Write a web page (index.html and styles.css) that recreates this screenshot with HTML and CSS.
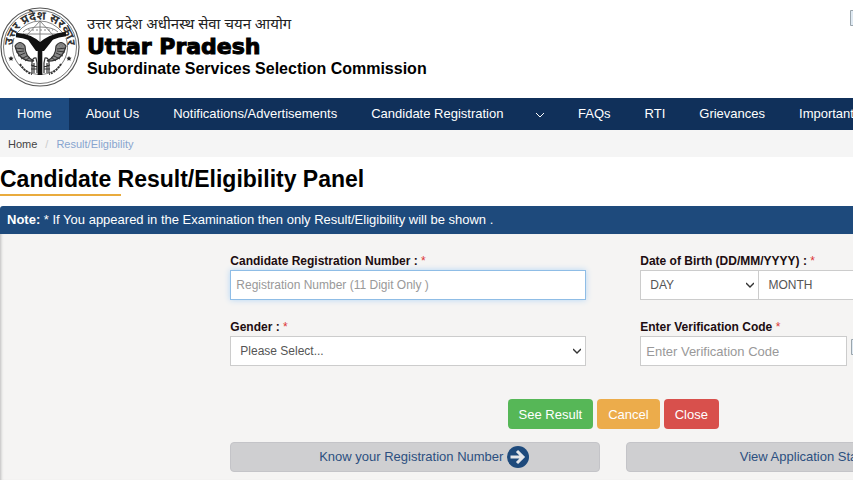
FILE: index.html
```
<!DOCTYPE html>
<html lang="en">

<head>
    <title>Candidate Result/Eligibility Panel</title>
    <meta charset="utf-8">
    <meta name="viewport" content="width=device-width, initial-scale=1">
    <link rel="stylesheet" href="styles.css">
</head>

<body>

    <header class="header">
        <svg class="emblem" viewBox="0 0 80 80" role="img" aria-label="Government of Uttar Pradesh">
            <defs>
                <path id="arc" d="M14 49A27.500 27.500 0 1 1 66 49" />
            </defs>
            <g fill="none" stroke="#555">
                <circle cx="40" cy="40" r="39" stroke-width="1.200" />
                <circle cx="40" cy="40" r="36.500" stroke-width=".8" />
                <path d="M14 31A27.500 27.500 0 1 0 66 31" stroke-width=".8" />
                <path d="M17 26Q27 14 40 14T63 26" stroke-width=".7" />
            </g>
            <text class="emblem-text"><textPath href="#arc" startOffset="50%" text-anchor="middle">उत्तर प्रदेश सरकार</textPath></text>
            <!-- bow and arrow -->
            <g fill="none" stroke="#777" stroke-width=".9">
                <path d="M23 25Q27 20 40 20T58 25M23 27H58M40 14V35M40 14L27 28M40 14L53 28" />
                <path d="M28 23h25" stroke-dasharray="2 2" />
            </g>
            <!-- rivers -->
            <path d="M16 28Q31 29 40 38Q50 29 66 27M40 36V68" fill="none" stroke="#111" stroke-width="4.600" />
            <path d="M26 30l14 6 15-6-11 14h-8z" fill="#111" />
            <!-- fish -->
            <g id="fish" fill="none" stroke="#333">
                <path d="M15 39q5-7 10 0q0 11 9 15q-15 1-19-15z" fill="#888" stroke-width="1.200" />
                <path d="M15 41l9 1M16 45l8-1M18 49l7-3M21 52l6-3M25 54l5-4" stroke-width="1" />
                <circle cx="20" cy="39" r="1" fill="#fff" stroke-width=".6" />
                <path d="M32 66V55q1-5 4-4l1 5v10M34 56v10M31 58l6 2M31 62h6" stroke-width="1.200" />
                <path d="M20 57q5 8 12 10" stroke-width="2" stroke-dasharray="2 1" />
            </g>
            <use href="#fish" transform="matrix(-1 0 0 1 81 0)" />
            <g fill="#222">
                <path d="M11 49l.8 1.600 1.800.2-1.300 1.200.3 1.800-1.600-.9-1.600.9.3-1.800-1.300-1.200 1.800-.2z" />
                <path d="M69 49l.8 1.600 1.800.2-1.300 1.200.3 1.800-1.600-.9-1.600.9.3-1.800-1.300-1.200 1.800-.2z" />
            </g>
        </svg>
        <div class="brand">
            <div class="brand-hindi" lang="hi">उत्तर प्रदेश अधीनस्थ सेवा चयन आयोग</div>
            <div class="brand-state">Uttar Pradesh</div>
            <div class="brand-name">Subordinate Services Selection Commission</div>
        </div>
        <svg class="missing header-missing" viewBox="0 0 16 16" aria-hidden="true">
            <path d="M.5.5h10l5 5v10H.5z" fill="#dfe9f2" stroke="#9aa5ad" />
            <path d="M3 3h7v3h3v7H3z" fill="#c3d9f5" />
            <path d="M3 13l4-5 6 5z" fill="#5aa454" />
        </svg>
    </header>

    <nav class="nav">
        <a class="active" href="#">Home</a>
        <a href="#">About Us</a>
        <a href="#">Notifications/Advertisements</a>
        <a href="#">Candidate Registration
            <svg viewBox="0 0 8 6" aria-hidden="true"><path d="M0 1l4 4 4-4" /></svg>
        </a>
        <a href="#">FAQs</a>
        <a href="#">RTI</a>
        <a href="#">Grievances</a>
        <a href="#">Important</a>
    </nav>

    <div class="breadcrumb">
        <a href="#">Home</a>
        <span class="slash">/</span>
        <span class="current">Result/Eligibility</span>
    </div>

    <h1 class="title">Candidate Result/Eligibility Panel</h1>

    <p class="note"><strong>Note:</strong> * If You appeared in the Examination then only Result/Eligibility will be shown .</p>

    <main class="panel">
        <form class="form">
            <div class="fields">
                <div class="field">
                    <label for="regno">Candidate Registration Number : <span class="req">*</span></label>
                    <input class="control focused" id="regno" type="text" placeholder="Registration Number (11 Digit Only )">
                </div>
                <div class="field">
                    <label for="day">Date of Birth (DD/MM/YYYY) : <span class="req">*</span></label>
                    <div class="dob">
                        <select class="control" id="day"><option>DAY</option></select>
                        <select class="control" aria-label="Month"><option>MONTH</option></select>
                        <select class="control" aria-label="Year"><option>YEAR</option></select>
                    </div>
                </div>
                <div class="field">
                    <label for="gender">Gender : <span class="req">*</span></label>
                    <select class="control" id="gender"><option>Please Select...</option></select>
                </div>
                <div class="field">
                    <label for="code">Enter Verification Code <span class="req">*</span></label>
                    <div class="captcha">
                        <input class="control" id="code" type="text" placeholder="Enter Verification Code">
                        <svg class="missing" viewBox="0 0 16 16" aria-hidden="true">
                            <path d="M.5.5h10l5 5v10H.5z" fill="#dfe9f2" stroke="#9aa5ad" />
                            <path d="M3 3h7v3h3v7H3z" fill="#c3d9f5" />
                            <path d="M3 13l4-5 6 5z" fill="#5aa454" />
                        </svg>
                    </div>
                </div>
            </div>

            <div class="actions">
                <button class="btn green" type="button">See Result</button>
                <button class="btn orange" type="button">Cancel</button>
                <button class="btn red" type="button">Close</button>
            </div>

            <div class="links">
                <a class="link" href="#">Know your Registration Number
                    <svg viewBox="0 0 22 22" aria-hidden="true">
                        <circle cx="11" cy="11" r="11" />
                        <path d="M3.500 11H16M10 5l6 6-6 6" />
                    </svg>
                </a>
                <a class="link" href="#">View Application Status
                    <svg viewBox="0 0 22 22" aria-hidden="true">
                        <circle cx="11" cy="11" r="11" />
                        <path d="M3.500 11H16M10 5l6 6-6 6" />
                    </svg>
                </a>
            </div>
        </form>
    </main>

</body>

</html>
```
FILE: styles.css
```
* {
    box-sizing: border-box;
}
html {
    height: 100%;
}
body {
    margin: 0;
    min-height: 100%;
    display: flex;
    flex-direction: column;
    overflow: hidden;
    background: #fff;
    color: #000;
    font-family: "Liberation Sans", Arial, sans-serif;
    font-size: 13px;
    line-height: 20px;
}
a {
    color: inherit;
    text-decoration: none;
}

/* header */
.header {
    display: flex;
    align-items: flex-start;
    gap: 7px;
    padding: 7px 0 11px;
}
.emblem {
    width: 80px;
    height: 80px;
    flex: none;
}
.emblem-text {
    font: bold 12px "Noto Sans", "Noto Sans Devanagari", sans-serif;
    fill: #333;
}
.brand {
    padding-top: 5px;
    white-space: nowrap;
}
.brand-hindi {
    font: 15px/22px "Noto Sans", "Noto Sans Devanagari", sans-serif;
    color: #222;
}
.brand-state {
    font: 900 22px/25px "Arial Black", "DejaVu Sans", sans-serif;
    -webkit-text-stroke: 1px #000;
}
.brand-name {
    font-size: 16px;
    font-weight: bold;
}
.missing {
    width: 16px;
    height: 16px;
    flex: none;
}
.header-missing {
    margin: 3px -13px 0 auto;
}

/* navigation */
.nav {
    display: flex;
    background: #10305a;
    color: #fff;
    white-space: nowrap;
}
.nav a {
    flex: none;
    padding: 6px 17px;
}
.nav .active {
    background: #1e4b80;
}
.nav svg {
    width: 8px;
    height: 6px;
    margin-left: 29px;
    fill: none;
    stroke: #fff;
    vertical-align: middle;
}

.breadcrumb {
    display: flex;
    gap: 8px;
    padding: 4px 8px 3px;
    background: #f5f5f5;
    color: #444;
    font-size: 11px;
}
.slash {
    color: #ccc;
}
.current {
    color: #88a5cf;
}

.title {
    margin: 0 0 10px;
    padding-top: 7px;
    font-size: 23px;
    line-height: 30px;
}
.title::after {
    content: "";
    display: block;
    width: 121px;
    height: 2px;
    background: #e9ab3d;
}
.note {
    margin: 0;
    padding: 4px 7px;
    border-radius: 3px 0 0 0;
    background: #1e4a7c;
    color: #fff;
    white-space: nowrap;
}

/* form */
.panel {
    flex: 1;
    padding: 18px 0 8px 27%;
    background: #f5f4f3;
    box-shadow: inset 3px 0 3px -2px #bbb;
}
/* runs past the right edge of the window */
.form {
    width: 123%;
}
.fields {
    display: grid;
    grid-template-columns: 1fr 1fr;
    gap: 18px 54px;
}
.field {
    min-width: 0;
}
.field label {
    display: block;
    color: #200c10;
    font-size: 12px;
    font-weight: bold;
    line-height: 18px;
}
.req {
    color: #dc3535;
    font-weight: normal;
}
.control {
    display: block;
    width: 100%;
    height: 30px;
    padding: 0 5px;
    border: 1px solid #ccc;
    border-radius: 0;
    background: #fff;
    color: #555;
    font: 12px "Liberation Sans", Arial, sans-serif;
}
.control::placeholder {
    color: #999;
}
select.control {
    appearance: none;
    padding: 0 24px 0 9px;
    background: #fff url("data:image/svg+xml,%3Csvg xmlns='http://www.w3.org/2000/svg' width='8' height='6'%3E%3Cpath d='M0 1l4 4 4-4' fill='none' stroke='%23333' stroke-width='1.4'/%3E%3C/svg%3E") no-repeat right 4px center;
}
.focused {
    border-color: #8fbde6;
    box-shadow: 0 0 6px #b5d6f5;
}
.dob {
    display: flex;
}
.dob .control + .control {
    border-left: 0;
}
.captcha {
    display: flex;
    gap: 4px;
}
.captcha .control {
    width: 58%;
    font-size: 13px;
}
.captcha .missing {
    margin-top: 3px;
}
.actions {
    display: flex;
    justify-content: center;
    gap: 4px;
    margin: 33px 0 13px;
}
.btn {
    height: 30px;
    padding: 0 11px;
    border: 0;
    border-radius: 4px;
    color: #fff;
    font: 13px "Liberation Sans", Arial, sans-serif;
}
.green {
    background: #56b757;
}
.orange {
    background: #ecac4b;
}
.red {
    background: #d8504c;
}
.links {
    display: grid;
    grid-template-columns: 1fr 1fr;
    gap: 26px;
}
.link {
    display: flex;
    align-items: center;
    justify-content: center;
    gap: 4px;
    height: 30px;
    padding-left: 18px;
    border: 1px solid #c4c4c8;
    border-radius: 4px;
    background: #cfcfd1;
    color: #2c4f80;
    white-space: nowrap;
}
.link svg {
    width: 22px;
    height: 22px;
    fill: #1e4a7c;
}
.link path {
    fill: none;
    stroke: #e4e6ea;
    stroke-width: 3;
}
```
